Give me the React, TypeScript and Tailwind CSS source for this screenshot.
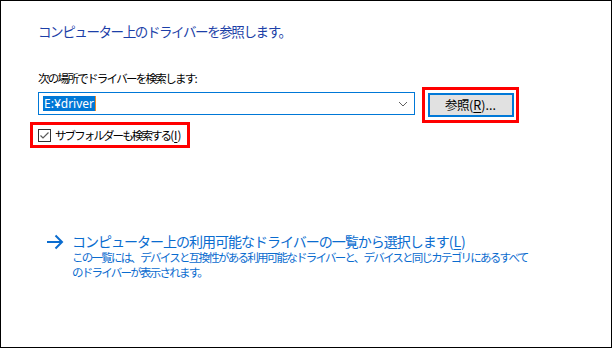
import { FunctionComponent } from "react";

const jp = "font-['Meiryo_UI','Noto_Sans_CJK_JP',sans-serif]";

const App: FunctionComponent = () => {
  return (
    <div
      className={`w-[612px] h-[348px] bg-white border border-black overflow-hidden ${jp}`}
    >
      <div className="flex flex-col items-start pl-[37px] pt-[22px]">
        <h1 className="m-0 h-[16px] leading-[16px] text-[13.5px] tracking-[-1.4px] font-normal text-[#1c3fa8] whitespace-nowrap">
          コンピューター上のドライバーを参照します。
        </h1>
        <div className="mt-[32px] h-[14px] leading-[14px] text-[11.5px] tracking-[-1.7px] text-black whitespace-nowrap">
          次の場所でドライバーを検索します:
        </div>
        <div className="mt-[2px] flex flex-row items-start gap-[7px]">
          <div className="mt-[5px] w-[377px] h-[23px] border border-[#0078d7] bg-white flex flex-row items-center justify-between pl-[4px] pr-[6px]">
            <div className="flex flex-row items-center">
              <span className="bg-[#0078d7] text-white text-[12px] leading-[15px] px-[1px] font-['Noto_Sans','Noto_Sans_CJK_JP',sans-serif]">
                E:¥driver
              </span>
              <span className="w-[1px] h-[15px] bg-[#f08a24]" />
            </div>
            <svg width="10" height="6" viewBox="0 0 10 6">
              <path d="M1 1 L5 5 L9 1" fill="none" stroke="#606060" strokeWidth="1" />
            </svg>
          </div>
          <div className="w-[97px] h-[36px] border-[3px] border-[#ff0000] flex items-center justify-center">
            <div className="w-[86px] h-[24px] border-2 border-[#0078d7] bg-[#e1e1e1] flex items-center justify-center text-[12.5px] text-black">
              <span className="tracking-[-0.5px]">参照</span>
              <span>
                (<span className="underline underline-offset-2">R</span>)...
              </span>
            </div>
          </div>
        </div>
        <div className="-mt-[1px] -ml-[8px] w-[160px] h-[26px] border-[3px] border-[#ff0000] flex flex-row items-center pl-[5px] gap-[4px]">
          <svg width="13" height="13" viewBox="0 0 13 13">
            <rect x="0.5" y="0.5" width="12" height="12" fill="white" stroke="#333333" />
            <path d="M2.5 6.5 L5 9 L10.5 3.5" fill="none" stroke="#5a5a5a" strokeWidth="1.2" />
          </svg>
          <span className="text-[11.5px] leading-[14px] text-black whitespace-nowrap">
            <span className="tracking-[-1.9px]">サブフォルダーも検索する</span>
            <span className="tracking-normal">
              (<span className="underline underline-offset-2">I</span>)
            </span>
          </span>
        </div>
        <div className="mt-[84px] ml-[8px] flex flex-row items-start gap-[8px]">
          <svg width="18" height="16" viewBox="0 0 18 16" className="mt-[2px]">
            <path d="M1 8 H16 M9.5 1.5 L16 8 L9.5 14.5" fill="none" stroke="#0a6ccf" strokeWidth="2" />
          </svg>
          <div className="flex flex-col items-start text-[#0a6ccf]">
            <div className="h-[18px] leading-[18px] text-[14px] whitespace-nowrap">
              <span className="tracking-[-1px]">
                コンピューター上の利用可能なドライバーの一覧から選択します
              </span>
              (<span className="underline underline-offset-2">L</span>)
            </div>
            <div className="text-[11.5px] leading-[15px] tracking-[-1.75px] whitespace-nowrap">
              この一覧には、デバイスと互換性がある利用可能なドライバーと、デバイスと同じカテゴリにあるすべて
              <br />
              のドライバーが表示されます。
            </div>
          </div>
        </div>
      </div>
    </div>
  );
};

export default App;
